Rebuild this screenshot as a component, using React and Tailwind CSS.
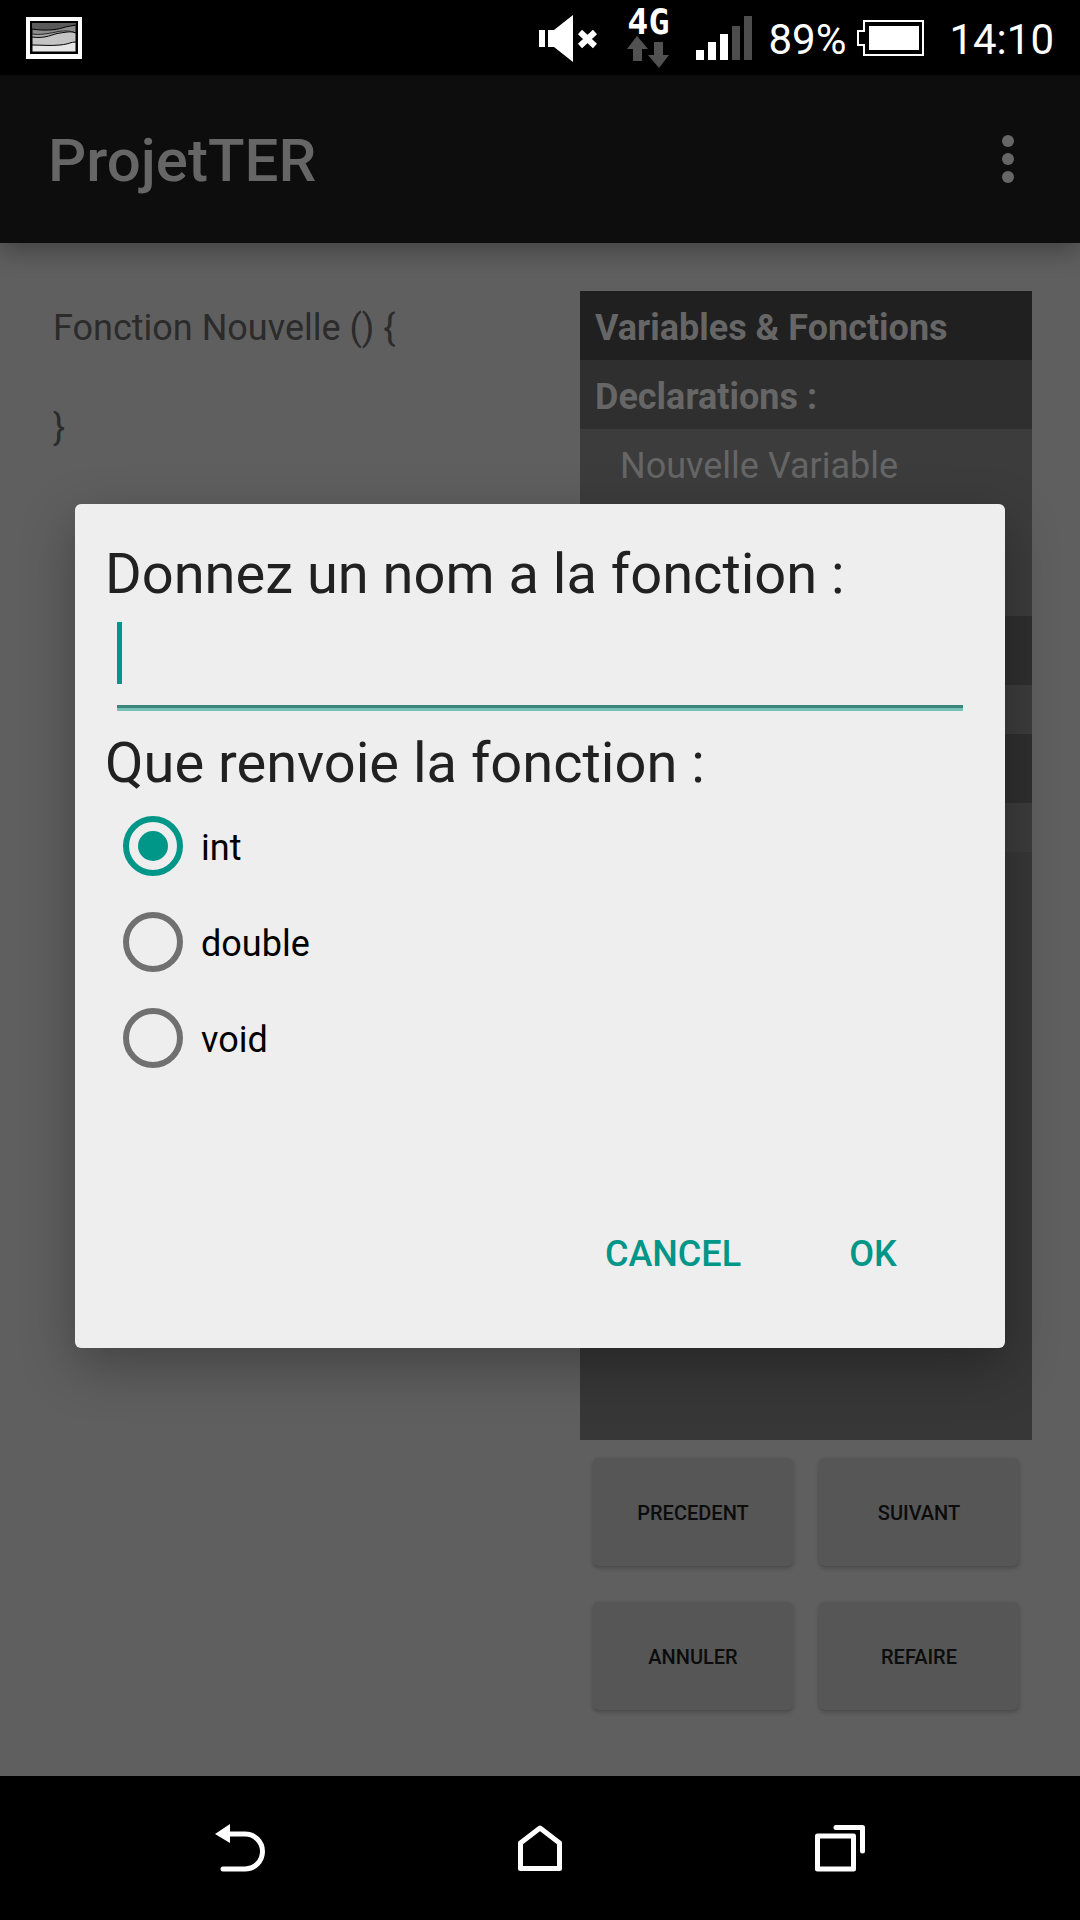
import { useState } from "react";

function PictureIcon() {
  return (
    <svg width="56" height="42" viewBox="0 0 56 42" role="img" aria-label="Image">
      <rect width="56" height="42" fill="#fff" />
      <rect x="4" y="4" width="48" height="33" fill="#000" />
      <rect x="6" y="6" width="44" height="29" fill="#5a5a5a" />
      <path d="M6 12 C18 14 30 13 36 11 S46 9 50 8 V35 H6Z" fill="#8c8c8c" stroke="#000" strokeWidth="1" />
      <path d="M6 17 C14 18 20 17 30 15 S44 14 50 16 V35 H6Z" fill="#a9a9a9" stroke="#222" strokeWidth="1" />
      <path d="M6 20 C20 22 26 17 34 16 S44 14 50 16 V35 H6Z" fill="#c4c4c4" stroke="#000" strokeWidth="1" />
      <path d="M6 28 C16 28 24 29 34 28 S44 25 50 25 V35 H6Z" fill="#e6e6e6" stroke="#000" strokeWidth="1" />
      <path d="M5 5 H51 V36 H5Z" fill="none" stroke="#000" strokeWidth="2" />
    </svg>
  );
}

function MuteIcon() {
  return (
    <svg width="58" height="48" viewBox="0 0 58 48" fill="#fff" role="img" aria-label="Son coupé">
      <rect y="16" width="6" height="17" />
      <path d="M9 16 H15 L34 1 V48 L15 33 H9Z" />
      <path d="M41 18 L56 32 M56 18 L41 32" stroke="#fff" strokeWidth="6" />
    </svg>
  );
}

function DataArrows() {
  return (
    <svg width="42" height="32" viewBox="0 0 42 32" fill="#525252" aria-hidden="true">
      <path d="M10 0 L21 13 H15 V25 H6 V13 H0Z" />
      <path d="M32 32 L21 19 H27 V6 H36 V19 H42Z" />
    </svg>
  );
}

function SignalIcon() {
  return (
    <svg width="56" height="44" viewBox="0 0 56 44" fill="#fff" role="img" aria-label="Signal">
      <rect x="0" y="34" width="8" height="10" />
      <rect x="12" y="26" width="8" height="18" />
      <rect x="24" y="18" width="8" height="26" />
      <rect x="36" y="10" width="8" height="34" fill="#4d4d4d" />
      <rect x="48" y="0" width="8" height="44" fill="#4d4d4d" />
    </svg>
  );
}

function BatteryIcon() {
  return (
    <svg width="68" height="36" viewBox="0 0 68 36" role="img" aria-label="Batterie">
      <path d="M7 1 H66 V35 H7 V25 H1 V11 H7Z" fill="none" stroke="#fff" strokeWidth="2" />
      <rect x="12" y="6" width="50" height="24" fill="#fff" />
    </svg>
  );
}

function StatusBar() {
  return (
    <div className="flex h-[75px] items-center bg-black px-[26px] text-[42px] leading-[48px] text-white">
      <PictureIcon />
      <div className="ml-auto flex items-center">
        <MuteIcon />
        <div className="ml-[30px] flex w-[42px] flex-col items-center">
          <span className="font-['DejaVu_Sans_Mono'] text-[35px] font-bold leading-[28px]">4G</span>
          <DataArrows />
        </div>
        <div className="ml-[27px]">
          <SignalIcon />
        </div>
        <span className="ml-[16px] pt-[4px]">89%</span>
        <div className="ml-[11px]">
          <BatteryIcon />
        </div>
        <span className="ml-[24px] pt-[4px]">14:10</span>
      </div>
    </div>
  );
}

function AppBar() {
  return (
    <header className="relative flex h-[168px] items-center justify-between bg-[#0d0d0d] pl-[48px] pr-[42px] text-[#666666] shadow-[0_8px_24px_rgba(0,0,0,0.3)]">
      <h1 className="pt-[4px] text-[60px] font-medium leading-[72px]">ProjetTER</h1>
      <button type="button" aria-label="Plus d'options" className="flex w-[60px] justify-center">
        <svg width="12" height="48" viewBox="0 0 12 48" fill="#666">
          <circle cx="6" cy="6" r="6" />
          <circle cx="6" cy="24" r="6" />
          <circle cx="6" cy="42" r="6" />
        </svg>
      </button>
    </header>
  );
}

const actions = ["PRECEDENT", "SUIVANT", "ANNULER", "REFAIRE"];

function SidePanel() {
  return (
    <aside className="flex flex-col">
      <div className="flex-1 bg-[#373737] text-[36px] leading-[45px] text-[#666666]">
        <h2 className="bg-[#202020] px-[15px] pb-[9px] pt-[15px] font-bold">Variables &amp; Fonctions</h2>
        <h3 className="bg-[#2f2f2f] px-[15px] pb-[9px] pt-[15px] font-bold">Declarations :</h3>
        <div className="h-[187px] bg-[#3c3c3c] px-[40px] pt-[15px]">Nouvelle Variable</div>
        <div className="h-[69px] bg-[#2f2f2f]" />
        <div className="h-[49px] bg-[#3c3c3c]" />
        <div className="h-[69px] bg-[#2f2f2f]" />
        <div className="h-[49px] bg-[#3c3c3c]" />
      </div>
      <div className="grid grid-cols-2">
        {actions.map((label) => (
          <div key={label} className="flex px-[13px] py-[18px]">
            <button
              type="button"
              className="h-[108px] flex-1 rounded-[6px] bg-[#565656] pt-[2px] text-[20px] font-medium leading-[24px] text-[#0c0c0c] shadow-[0_2px_4px_rgba(0,0,0,0.25)]"
            >
              {label}
            </button>
          </div>
        ))}
      </div>
    </aside>
  );
}

const types = ["int", "double", "void"];

function FunctionDialog() {
  const [name, setName] = useState("");
  const [type, setType] = useState("int");
  return (
    <form
      role="dialog"
      aria-label="Nouvelle fonction"
      onSubmit={(e) => e.preventDefault()}
      className="mx-[75px] flex-1 rounded-[6px] bg-[#eeeeee] pb-[46px] pl-[30px] pr-[32px] pt-[36px] shadow-[0_18px_54px_rgba(0,0,0,0.3)]"
    >
      <label htmlFor="fn-name" className="block text-[56px] leading-[68px] text-[#212121]">
        Donnez un nom a la fonction :
      </label>
      <div className="relative ml-[12px] mr-[10px] border-b-[3px] border-[#77c0b6]">
        <input
          id="fn-name"
          value={name}
          onChange={(e) => setName(e.target.value)}
          className="block h-[100px] w-full border-b-[3px] border-[#3a857c] bg-transparent pb-[12px] text-[54px] caret-[#009688] outline-none"
        />
        {name === "" && <span className="pointer-events-none absolute left-0 top-[14px] h-[62px] w-[5px] bg-[#009688]" />}
      </div>
      <fieldset>
        <legend className="pb-[1px] pt-[18px] text-[56px] leading-[68px] text-[#212121]">Que renvoie la fonction :</legend>
        {types.map((t) => (
          <label key={t} className="flex h-[96px] items-center pl-[18px] text-[36px] leading-[42px] text-black">
            <input
              type="radio"
              name="fn-type"
              value={t}
              checked={type === t}
              onChange={() => setType(t)}
              className="mr-[18px] grid size-[60px] appearance-none place-items-center rounded-full border-[6px] border-[#707070] before:size-[30px] before:rounded-full checked:border-[#009688] checked:before:bg-[#009688]"
            />
            <span className="pt-[4px]">{t}</span>
          </label>
        ))}
      </fieldset>
      <div className="mt-[120px] flex justify-end text-[36px] font-medium leading-[42px] text-[#009688]">
        <button type="button" className="h-[96px] w-[200px]">
          CANCEL
        </button>
        <button type="submit" className="h-[96px] w-[200px]">
          OK
        </button>
      </div>
    </form>
  );
}

function NavBar() {
  return (
    <nav className="grid h-[144px] grid-cols-3 bg-black px-[90px]">
      <button type="button" aria-label="Retour" className="flex items-center justify-center">
        <svg width="52" height="48" viewBox="0 0 52 48" fill="none" stroke="#fff" strokeWidth="5">
          <path d="M14 10 H31 A17.500 17.500 0 0 1 31 45 H9" strokeLinecap="round" />
          <path d="M1 10 L16 0 V19Z" fill="#fff" stroke="none" />
        </svg>
      </button>
      <button type="button" aria-label="Accueil" className="flex items-center justify-center">
        <svg width="44" height="48" viewBox="0 0 44 48" fill="none" stroke="#fff" strokeWidth="5" strokeLinejoin="round">
          <path d="M22 4 L41.500 19 V44.500 H2.500 V19Z" />
        </svg>
      </button>
      <button type="button" aria-label="Applications" className="flex items-center justify-center">
        <svg width="50" height="48" viewBox="0 0 50 48" fill="none" stroke="#fff" strokeWidth="5" strokeLinejoin="round" strokeLinecap="round">
          <rect x="2.500" y="12" width="36" height="33" />
          <path d="M21 3.500 H47.500 V27" />
        </svg>
      </button>
    </nav>
  );
}

export default function App() {
  return (
    <div className="flex min-h-screen flex-col bg-[#5f5f5f] font-[Roboto,sans-serif]">
      <StatusBar />
      <div className="relative flex flex-1 flex-col">
        <AppBar />
        <main className="grid flex-1 grid-cols-[532fr_452fr] p-[48px]">
          <pre className="px-[5px] pt-[12px] font-[Roboto,sans-serif] text-[36px] leading-[50px] text-[#2b2b2b]">
            {"Fonction Nouvelle () {\n\n}"}
          </pre>
          <SidePanel />
        </main>
        <div className="absolute inset-0 flex items-center">
          <FunctionDialog />
        </div>
      </div>
      <NavBar />
    </div>
  );
}
